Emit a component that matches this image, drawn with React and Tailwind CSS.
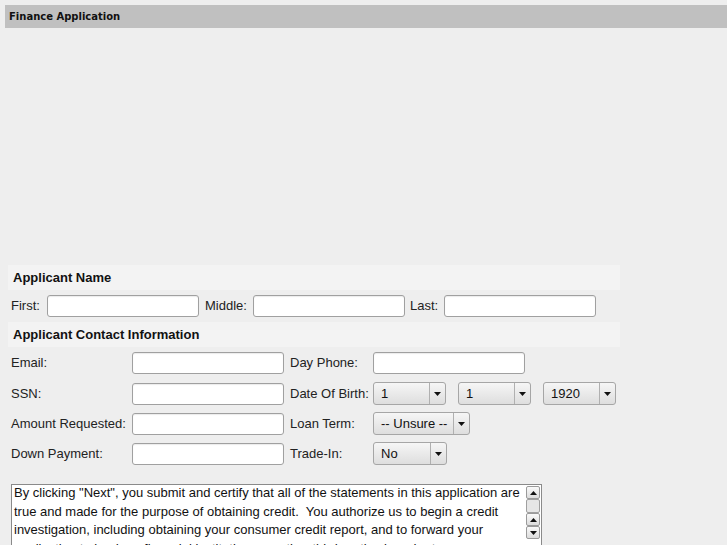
import React from 'react';

const sans = "font-['Liberation_Sans',Arial,sans-serif]";

const TextBox = ({ className = '' }) => (
    <div className={`h-[22px] w-[152px] bg-white border border-[#a0a0a0] rounded-[3px] shadow-[inset_0_1px_1px_rgba(0,0,0,0.08)] ${className}`} />
);

const Select = ({ value, width }) => (
    <div
        className="flex h-[23px] border border-[#a6a6a6] rounded-[3px] bg-gradient-to-b from-[#f6f6f6] to-[#dedede] text-[13px] text-[#111]"
        style={{ width }}
    >
        <div className="flex-1 flex items-center pl-[7px] whitespace-nowrap">{value}</div>
        <div className="w-[16px] border-l border-[#b0b0b0] flex items-center justify-center">
            <svg width="7" height="4" viewBox="0 0 7 4">
                <path d="M0 0h7L3.5 4z" fill="#111" />
            </svg>
        </div>
    </div>
);

const Band = ({ children }) => (
    <div className="w-[612px] h-[25px] bg-[#f3f3f3] flex items-center pl-[5px] text-[13px] font-bold text-[#111]">
        {children}
    </div>
);

const ScrollBtn = ({ up }) => (
    <div className="h-[13px] w-[14px] border border-[#9a9a9a] rounded-[2px] bg-gradient-to-b from-[#fafafa] to-[#dcdcdc] flex items-center justify-center">
        <svg width="7" height="4" viewBox="0 0 7 4">
            <path d={up ? 'M0 4h7L3.5 0z' : 'M0 0h7L3.5 4z'} fill="#111" />
        </svg>
    </div>
);

const lines = [
    'By clicking "Next", you submit and certify that all of the statements in this application are',
    'true and made for the purpose of obtaining credit.  You authorize us to begin a credit',
    'investigation, including obtaining your consumer credit report, and to forward your',
    'application to lenders, financial institutions, or other third parties in order to process your',
];

export default function App() {
    return (
        <div className={`h-[545px] overflow-hidden bg-[#eeeeee] pt-[5px] ${sans} text-[#222]`}>
            <div className="ml-[5px] h-[23px] bg-[#c0c0c0] flex items-center pl-[4px] font-['DejaVu_Sans',sans-serif] text-[10px] font-bold text-[#111]">
                Finance Application
            </div>

            <div className="h-[237px]" />

            <div className="ml-[8px]">
                <Band>Applicant Name</Band>
                <div className="h-[32px] flex items-center text-[13px] pl-[3px]">
                    <span className="w-[36px]">First:</span>
                    <TextBox />
                    <span className="ml-[6px] w-[48px]">Middle:</span>
                    <TextBox />
                    <span className="ml-[5px] w-[34px]">Last:</span>
                    <TextBox />
                </div>
                <Band>Applicant Contact Information</Band>

                <div className="pl-[3px] pt-[5px] grid grid-cols-[121px_158px_83px_auto] auto-rows-[30px] text-[13px]">
                    <div className="h-[22px] flex items-center">Email:</div>
                    <TextBox />
                    <div className="h-[22px] flex items-center">Day Phone:</div>
                    <TextBox />

                    <div className="h-[22px] flex items-center mt-[1px]">SSN:</div>
                    <TextBox className="mt-[1px]" />
                    <div className="h-[22px] flex items-center mt-[1px]">Date Of Birth:</div>
                    <div className="flex gap-[12px]">
                        <Select value="1" width="73px" />
                        <Select value="1" width="73px" />
                        <Select value="1920" width="73px" />
                    </div>

                    <div className="h-[22px] flex items-center mt-[1px]">Amount Requested:</div>
                    <TextBox className="mt-[1px]" />
                    <div className="h-[22px] flex items-center mt-[1px]">Loan Term:</div>
                    <div><Select value="-- Unsure --" width="97px" /></div>

                    <div className="h-[22px] flex items-center mt-[1px]">Down Payment:</div>
                    <TextBox className="mt-[1px]" />
                    <div className="h-[22px] flex items-center mt-[1px]">Trade-In:</div>
                    <div><Select value="No" width="74px" /></div>
                </div>

                <div className="ml-[3px] mt-[12px] w-[531px] h-[90px] bg-white border border-[#8a8a8a] flex">
                    <div className="flex-1 pl-[2px] -mt-[1px] text-[13px] leading-[18.5px] text-[#111] whitespace-pre overflow-hidden">
                        {lines.map((l) => (
                            <div key={l}>{l}</div>
                        ))}
                    </div>
                    <div className="w-[16px] pt-[1px] flex flex-col items-center">
                        <ScrollBtn up />
                        <div className="h-[14px] w-[14px] border border-[#a0a0a0] rounded-[2px] bg-[#e6e6e6]" />
                        <ScrollBtn up />
                        <ScrollBtn />
                    </div>
                </div>
            </div>
        </div>
    );
}
